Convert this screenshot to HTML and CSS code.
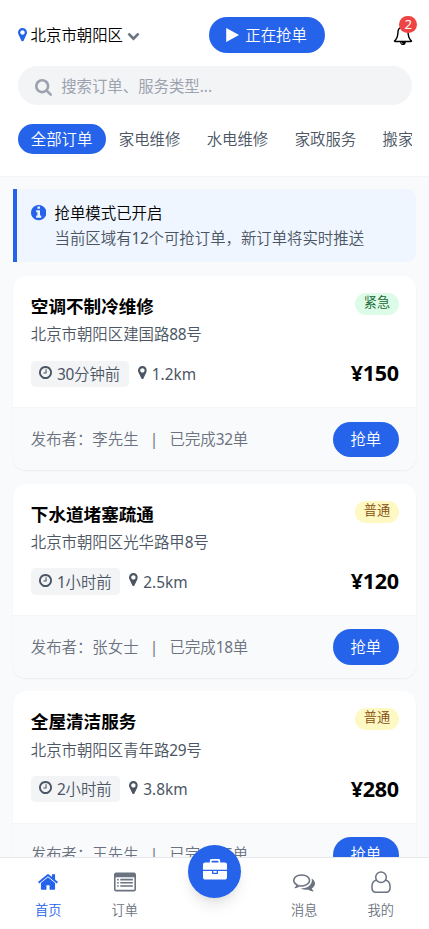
FILE: index.html
```html
<!DOCTYPE html>
<html lang="zh-CN">
<head>
<meta charset="utf-8">
<title>抢单</title>
<link rel="stylesheet" href="styles.css">
</head>
<body>
<svg class="defs" aria-hidden="true">
<symbol id="marker" viewBox="384 128 1024 1536"><path d="M1152 640q0-106-75-181t-181-75-181 75-75 181 75 181 181 75 181-75 75-181zm256 0q0 109-33 179l-364 774q-16 33-47.5 52t-67.5 19-67.5-19-46.5-52l-365-774q-33-70-33-179 0-212 150-362t362-150 362 150 150 362z"/></symbol>
<symbol id="down" viewBox="0 0 1792 1792"><path d="M1683 808l-742 741q-19 19-45 19t-45-19l-742-741q-19-19-19-45.500t19-45.500l166-165q19-19 45-19t45 19l531 531 531-531q19-19 45-19t45 19l166 165q19 19 19 45.500t-19 45.500z"/></symbol>
<symbol id="play" viewBox="192 0 1408 1792"><path d="M1576 927l-1328 738q-23 13-39.500 3t-16.500-36v-1472q0-26 16.500-36t39.500 3l1328 738q23 13 23 31t-23 31z"/></symbol>
<symbol id="bell" viewBox="0 0 1792 1792"><path d="M912 1696q0-16-16-16-59 0-101.500-42.500t-42.500-101.500q0-16-16-16t-16 16q0 73 51.500 124.500t124.500 51.500q16 0 16-16zm-666-288h1300q-266-300-266-832 0-51-24-105t-69-103-121.500-80.500-169.500-31.500-169.500 31.500-121.500 80.500-69 103-24 105q0 532-266 832zm1482 0q0 52-38 90t-90 38h-448q0 106-75 181t-181 75-181-75-75-181h-448q-52 0-90-38t-38-90q50-42 91-88t85-119.500 74.500-158.500 50-206 19.500-260q0-152 117-282.500t307-158.500q-8-19-8-39 0-40 28-68t68-28 68 28 28 68q0 20-8 39 190 28 307 158.500t117 282.500q0 139 19.500 260t50 206 74.500 158.500 85 119.500 91 88z"/></symbol>
<symbol id="search" viewBox="64 128 1664 1664"><path d="M1216 832q0-185-131.500-316.500t-316.500-131.500-316.500 131.500-131.500 316.500 131.500 316.500 316.500 131.500 316.500-131.500 131.500-316.500zm512 832q0 52-38 90t-90 38q-54 0-90-38l-343-342q-179 124-399 124-143 0-273.500-55.500t-225-150-150-225-55.500-273.500 55.500-273.500 150-225 225-150 273.500-55.500 273.500 55.500 225 150 150 225 55.500 273.500q0 220-124 399l343 343q37 37 37 90z"/></symbol>
<symbol id="info" viewBox="128 128 1536 1536"><path d="M1152 1376v-160q0-14-9-23t-23-9h-96v-512q0-14-9-23t-23-9h-320q-14 0-23 9t-9 23v160q0 14 9 23t23 9h96v320h-96q-14 0-23 9t-9 23v160q0 14 9 23t23 9h448q14 0 23-9t9-23zm-128-896v-160q0-14-9-23t-23-9h-192q-14 0-23 9t-9 23v160q0 14 9 23t23 9h192q14 0 23-9t9-23zm640 416q0 209-103 385.500t-279.500 279.500-385.500 103-385.500-103-279.500-279.500-103-385.500 103-385.500 279.500-279.500 385.500-103 385.500 103 279.500 279.500 103 385.500z"/></symbol>
<symbol id="clock" viewBox="128 128 1536 1536"><path d="M1024 544v448q0 14-9 23t-23 9h-320q-14 0-23-9t-9-23v-64q0-14 9-23t23-9h224v-352q0-14 9-23t23-9h64q14 0 23 9t9 23zm416 352q0-148-73-273t-198-198-273-73-273 73-198 198-73 273 73 273 198 198 273 73 273-73 198-198 73-273zm224 0q0 209-103 385.500t-279.500 279.500-385.500 103-385.500-103-279.500-279.500-103-385.500 103-385.500 279.500-279.500 385.500-103 385.500 103 279.500 279.500 103 385.500z"/></symbol>
<symbol id="home" viewBox="0 0 1792 1792"><path d="M1472 992v480q0 26-19 45t-45 19h-384v-384h-256v384h-384q-26 0-45-19t-19-45v-480q0-1 .5-3t.5-3l575-474 575 474q1 2 1 6zm223-69l-62 74q-8 9-21 11h-3q-13 0-21-7l-692-577-692 577q-12 8-24 7-13-2-21-11l-62-74q-8-10-7-23.500t11-21.500l719-599q32-26 76-26t76 26l244 204v-195q0-14 9-23t23-9h192q14 0 23 9t9 23v408l219 182q10 8 11 21.500t-7 23.500z"/></symbol>
<symbol id="list" viewBox="0 0 1792 1792"><path fill-rule="evenodd" d="M160 128h1472q66 0 113 47t47 113v1216q0 66-47 113t-113 47h-1472q-66 0-113-47t-47-113v-1216q0-66 47-113t113-47zm0 384q-32 0-32 32v960q0 32 32 32h1472q32 0 32-32v-960q0-32-32-32zM256 640h128v128h-128zM256 896h128v128h-128zM256 1152h128v128h-128zM512 640h1024v128h-1024zM512 896h1024v128h-1024zM512 1152h1024v128h-1024z"/></symbol>
<symbol id="briefcase" viewBox="0 0 1792 1792"><path d="M640 256h512v-128h-512v128zm1152 640v480q0 66-47 113t-113 47h-1472q-66 0-113-47t-47-113v-480h672v160q0 26 19 45t45 19h320q26 0 45-19t19-45v-160h672zm-768 0v128h-256v-128h256zm768-480v384h-1792v-384q0-66 47-113t113-47h352v-160q0-40 28-68t68-28h576q40 0 68 28t28 68v160h352q66 0 113 47t47 113z"/></symbol>
<symbol id="comments" viewBox="0 0 1792 1792"><path d="M704 384q-153 0-286 52t-211.500 141-78.500 191q0 82 53 158t149 132l97 56-35 84q34-20 62-39l44-31 53 10q78 14 153 14 153 0 286-52t211.500-141 78.500-191-78.500-191-211.500-141-286-52zm0-128q191 0 353.500 68.500t256.500 186.500 94 257-94 257-256.500 186.500-353.500 68.500q-86 0-176-16-124 88-278 128-36 9-86 16h-3q-11 0-20.500-8t-11.500-21q-1-3-1-6.500t.5-6.500 2-6l2.500-5 3.500-5.500 4-5 4.500-5 4-4.500q5-6 23-25t26-29.500 22.500-29 25-38.500 20.500-44q-124-72-195-177t-71-224q0-139 94-257t256.500-186.500 353.500-68.500zm822 1169q10 24 20.500 44t25 38.500 22.500 29 26 29.500 23 25q1 1 4 4.500t4.500 5 4 5 3.500 5.500l2.500 5 2 6 .5 6.500-1 6.500q-3 14-13 22t-22 7q-50-7-86-16-154-40-278-128-90 16-176 16-271 0-472-132 58 4 88 4 161 0 309-45t264-129q125-92 192-212t67-254q0-77-23-152 129 71 204 178t75 230q0 120-71 224.500t-195 176.500z"/></symbol>
<symbol id="user" viewBox="0 0 20 22"><g fill="none" stroke="currentColor" stroke-width="1.5"><circle cx="10" cy="6.200" r="5.300"/><path d="M5.500 9.300C2.200 9.600.9 12.700.9 16.300c0 3.300 1.500 5 4.100 5h10c2.600 0 4.100-1.700 4.100-5 0-3.600-1.300-6.700-4.600-7"/></g></symbol>
</svg>
<header class="header">
  <div class="topbar">
    <div class="location"><svg class="pin"><use href="#marker"/></svg><span>北京市朝阳区</span><svg class="chevron"><use href="#down"/></svg></div>
    <button class="mode"><svg><use href="#play"/></svg>正在抢单</button>
    <div class="notify"><svg><use href="#bell"/></svg><span class="badge">2</span></div>
  </div>
  <div class="search"><svg><use href="#search"/></svg><span>搜索订单、服务类型...</span></div>
  <nav class="tabs"><a class="tab active">全部订单</a><a class="tab">家电维修</a><a class="tab">水电维修</a><a class="tab">家政服务</a><a class="tab">搬家</a></nav>
</header>
<main class="content">
  <section class="alert">
    <svg><use href="#info"/></svg>
    <div><p class="alert-title">抢单模式已开启</p><p class="alert-text">当前区域有<span class="num">12</span>个可抢订单，新订单将实时推送</p></div>
  </section>
  <article class="card">
    <div class="body">
      <div class="head"><h3>空调不制冷维修</h3><span class="tag urgent">紧急</span></div>
      <p class="address">北京市朝阳区建国路<span class="num">88</span>号</p>
      <div class="meta"><span class="time"><svg><use href="#clock"/></svg><span><span class="num">30</span>分钟前</span></span><span class="distance"><svg><use href="#marker"/></svg><span>1.2km</span></span><strong class="price">¥150</strong></div>
    </div>
    <div class="foot"><span>发布者：李先生</span><i class="bar">|</i><span>已完成<span class="num">32</span>单</span><button class="grab">抢单</button></div>
  </article>
  <article class="card">
    <div class="body">
      <div class="head"><h3>下水道堵塞疏通</h3><span class="tag normal">普通</span></div>
      <p class="address">北京市朝阳区光华路甲<span class="num">8</span>号</p>
      <div class="meta"><span class="time"><svg><use href="#clock"/></svg><span><span class="num">1</span>小时前</span></span><span class="distance"><svg><use href="#marker"/></svg><span>2.5km</span></span><strong class="price">¥120</strong></div>
    </div>
    <div class="foot"><span>发布者：张女士</span><i class="bar">|</i><span>已完成<span class="num">18</span>单</span><button class="grab">抢单</button></div>
  </article>
  <article class="card">
    <div class="body">
      <div class="head"><h3>全屋清洁服务</h3><span class="tag normal">普通</span></div>
      <p class="address">北京市朝阳区青年路<span class="num">29</span>号</p>
      <div class="meta"><span class="time"><svg><use href="#clock"/></svg><span><span class="num">2</span>小时前</span></span><span class="distance"><svg><use href="#marker"/></svg><span>3.8km</span></span><strong class="price">¥280</strong></div>
    </div>
    <div class="foot"><span>发布者：王先生</span><i class="bar">|</i><span>已完成<span class="num">45</span>单</span><button class="grab">抢单</button></div>
  </article>
</main>
<nav class="bottom">
  <a class="item on"><svg><use href="#home"/></svg>首页</a>
  <a class="item"><svg><use href="#list"/></svg>订单</a>
  <a class="fab"><svg><use href="#briefcase"/></svg></a>
  <a class="item"><svg><use href="#comments"/></svg>消息</a>
  <a class="item"><svg class="user"><use href="#user"/></svg>我的</a>
</nav>
</body>
</html>
```
FILE: styles.css
```css
* { box-sizing: border-box; }
html, body { height: 100%; }
body {
  margin: 0;
  overflow: hidden;
  display: flex;
  flex-direction: column;
  background: #f9fafb;
  color: #000;
  font: 350 15.4px/22px "Noto Sans", "Noto Sans CJK SC", sans-serif;
}
p, h3 { margin: 0; }
svg { fill: currentColor; flex: none; display: block; }
.defs { position: absolute; width: 0; height: 0; }
button { font: inherit; border: 0; color: #fff; background: #2563eb; border-radius: 99px; padding: 1px 0 0; }
.num { font-weight: 400; letter-spacing: -0.3px; }

.header { flex: none; height: 177px; background: #fff; border-bottom: 1px solid #f3f4f6; padding: 17px 17px 0 17.6px; }
.topbar { display: flex; align-items: center; justify-content: space-between; height: 36px; }
.location { display: flex; align-items: center; width: 123px; }
.location span { padding-top: 2px; }
.pin { width: 9px; height: 13.500px; color: #2563eb; margin-right: 4px; }
.chevron { width: 13px; height: 13px; color: #6b7280; margin-left: 4.500px; }
.mode { display: flex; align-items: center; justify-content: center; width: 116px; height: 35.500px; gap: 6px; }
.mode svg { width: 13px; height: 16px; margin-top: -2px; }
.notify { position: relative; width: 20px; height: 20px; margin-right: -0.5px; }
.notify svg { width: 20px; height: 20px; }
.badge { position: absolute; top: -9.500px; right: -4.500px; width: 17.600px; height: 17.600px; border-radius: 50%; background: #ef4444; color: #fff; font-size: 13.200px; font-weight: 400; line-height: 17px; text-align: center; }
.search { display: flex; align-items: center; gap: 9px; margin-top: 13px; height: 39px; border-radius: 20px; background: #f3f4f6; color: #9ca3af; padding: 3px 17.600px 0; }
.search span { font-weight: 400; }
.search svg { width: 17px; height: 17px; margin-top: 1px; }
.tabs { display: flex; margin-top: 18.500px; overflow: hidden; }
.tab { flex: none; padding: 5.500px 13.200px 3px; line-height: 22px; border-radius: 16px; color: #4b5563; }
.tab.active { background: #2563eb; color: #fff; }

.content { flex: 1; min-height: 0; overflow: hidden; padding: 12.400px 13.200px 0; }
.alert { display: flex; gap: 8.500px; height: 73px; padding: 14px 13.500px; border-left: 4.400px solid #2563eb; border-radius: 0 8.800px 8.800px 0; background: #eff6ff; margin-bottom: 13.500px; }
.alert svg { width: 15.400px; height: 15.400px; color: #2563eb; margin-top: 2px; }
.alert-text { color: #4b5563; margin-top: 3px; }
.card { height: 194.500px; margin-bottom: 13.200px; border-radius: 13.200px; overflow: hidden; background: #fff; box-shadow: 0 1px 2px rgba(0,0,0,.06); }
.body { height: 131.500px; padding: 17.100px 17px 17px 17.600px; }
.head { display: flex; align-items: flex-start; justify-content: space-between; }
h3 { font-size: 17.600px; line-height: 26.400px; font-weight: 700; }
.tag { font-size: 13.200px; line-height: 17.600px; padding: 1px 8.600px 3px; border-radius: 11px; height: 22px; }
.urgent { color: #166534; background: #dcfce7; }
.normal { color: #854d0e; background: #fef9c3; }
.address { color: #4b5563; margin-top: 5px; }
.meta { display: flex; align-items: center; color: #4b5563; margin-top: 12px; height: 31px; }
.time, .distance { display: flex; align-items: center; gap: 5px; }
.time > span, .distance > span { padding-top: 2px; }
.time { height: 26.400px; border-radius: 4.400px; background: #f3f4f6; padding: 0 8.800px 0 8.200px; }
.time svg { width: 13px; height: 13px; margin-top: -3px; }
.distance { margin-left: 9px; font-weight: 400; }
.distance svg { width: 8.800px; height: 13.200px; margin-top: -3px; }
.price { margin-left: auto; color: #000; font-size: 21.500px; letter-spacing: -0.3px; padding-bottom: 1px; }
.foot { display: flex; align-items: center; height: 63px; padding: 0 17px 0 17.600px; border-top: 1px solid #f3f4f6; background: #f9fafb; color: #6b7280; }
.foot > span, .bar { padding-top: 1px; }
.bar { font-style: normal; font-weight: 400; width: 31px; text-align: center; }
.grab { width: 66px; height: 35.500px; margin-left: auto; }

.bottom { flex: none; position: relative; display: grid; grid-template-columns: 76.500px 76.500px 103px 76.500px 76.500px; justify-content: center; height: 72px; background: #fff; border-top: 1px solid #e5e7eb; }
.item { display: flex; flex-direction: column; align-items: center; color: #6b7280; font-size: 13.200px; line-height: 18px; padding-top: 13px; }
.item svg { width: 22px; height: 22px; margin-bottom: 8px; }
.item svg.user { width: 20px; }
.on { color: #2563eb; }
.fab { display: flex; align-items: center; justify-content: center; justify-self: center; width: 53px; height: 53px; margin-top: -13.500px; border-radius: 50%; background: #2563eb; color: #fff; box-shadow: 0 10px 15px -3px rgba(0,0,0,.1), 0 4px 6px -2px rgba(0,0,0,.05); }
.fab svg { width: 24px; height: 24px; }
```
